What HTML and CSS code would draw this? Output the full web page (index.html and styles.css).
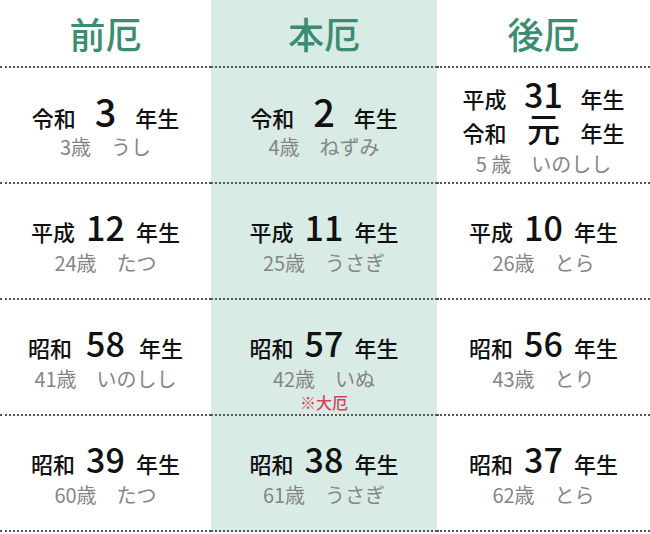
FILE: index.html
```html
<!DOCTYPE html>
<html lang="ja">
<head>
<meta charset="utf-8">
<link rel="stylesheet" href="styles.css">
</head>
<body>
<div class="table">
  <div class="cell head">前厄</div>
  <div class="cell head mid">本厄</div>
  <div class="cell head">後厄</div>

  <div class="cell">
    <div class="main wide"><span class="era">令和</span><span class="num">3</span><span class="nen">年生</span></div>
    <div class="sub">3歳　うし</div>
  </div>
  <div class="cell mid">
    <div class="main wide"><span class="era">令和</span><span class="num">2</span><span class="nen">年生</span></div>
    <div class="sub">4歳　ねずみ</div>
  </div>
  <div class="cell">
    <div class="dual">
      <span class="era">平成</span><span class="num">31</span><span class="nen">年生</span>
      <span class="era">令和</span><span class="num gan">元</span><span class="nen">年生</span>
    </div>
    <div class="sub">5 歳　いのしし</div>
  </div>

  <div class="cell">
    <div class="main"><span class="era">平成</span><span class="num">12</span><span class="nen">年生</span></div>
    <div class="sub">24歳　たつ</div>
  </div>
  <div class="cell mid">
    <div class="main"><span class="era">平成</span><span class="num">11</span><span class="nen">年生</span></div>
    <div class="sub">25歳　うさぎ</div>
  </div>
  <div class="cell">
    <div class="main"><span class="era">平成</span><span class="num">10</span><span class="nen">年生</span></div>
    <div class="sub">26歳　とら</div>
  </div>

  <div class="cell">
    <div class="main wide2"><span class="era">昭和</span><span class="num">58</span><span class="nen">年生</span></div>
    <div class="sub">41歳　いのしし</div>
  </div>
  <div class="cell mid">
    <div class="main"><span class="era">昭和</span><span class="num">57</span><span class="nen">年生</span></div>
    <div class="sub">42歳　いぬ</div>
    <div class="note">※大厄</div>
  </div>
  <div class="cell">
    <div class="main"><span class="era">昭和</span><span class="num">56</span><span class="nen">年生</span></div>
    <div class="sub">43歳　とり</div>
  </div>

  <div class="cell">
    <div class="main"><span class="era">昭和</span><span class="num">39</span><span class="nen">年生</span></div>
    <div class="sub">60歳　たつ</div>
  </div>
  <div class="cell mid">
    <div class="main"><span class="era">昭和</span><span class="num">38</span><span class="nen">年生</span></div>
    <div class="sub">61歳　うさぎ</div>
  </div>
  <div class="cell">
    <div class="main"><span class="era">昭和</span><span class="num">37</span><span class="nen">年生</span></div>
    <div class="sub">62歳　とら</div>
  </div>
</div>
</body>
</html>
```

FILE: styles.css
```css
html, body {
  margin: 0;
  padding: 0;
  background: #ffffff;
}
body {
  font-family: "Noto Sans CJK JP", "Noto Sans", sans-serif;
  color: #111111;
}
.table {
  display: grid;
  grid-template-columns: 211px 226px 213px;
  grid-template-rows: 68px repeat(4, 116px);
  width: 650px;
}
.cell {
  box-sizing: border-box;
  border-bottom: 2px dotted #555555;
  display: flex;
  flex-direction: column;
  align-items: center;
  justify-content: center;
  padding-top: 4px;
}
.mid {
  background: #d9ebe5;
}
.head {
  padding-top: 0;
  font-size: 36px;
  font-weight: 500;
  color: #3a8d72;
  line-height: 1;
}
.main {
  display: flex;
  align-items: baseline;
  gap: 11px;
}
.main.wide { gap: 19px; }
.main.wide2 { gap: 14px; }
.era, .nen {
  font-size: 22px;
  font-weight: 500;
  line-height: 22px;
}
.num {
  font-size: 34px;
  font-weight: 500;
  line-height: 36px;
}
.wide .num { font-size: 38px; }
.dual {
  display: grid;
  grid-template-columns: auto 74px auto;
  align-items: baseline;
  text-align: center;
}
.dual .era, .dual .nen { line-height: 22px; }
.dual .num { font-size: 34px; line-height: 35px; }
.dual .gan { font-size: 33px; }
.sub {
  font-size: 20px;
  color: #858585;
  line-height: 28px;
  margin-top: 4px;
}
.note {
  font-size: 16px;
  font-weight: 500;
  color: #d8435c;
  line-height: 18px;
  margin-bottom: -18px;
}
```
